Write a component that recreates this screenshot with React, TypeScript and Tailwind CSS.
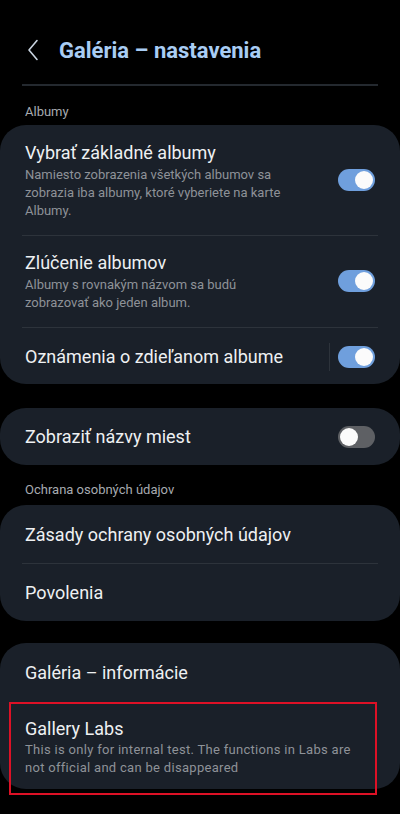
import React from "react";

function Toggle({ on }: { on: boolean }) {
  return on ? (
    <div className="w-[37px] h-[22px] rounded-full bg-[#6f9fdd] flex items-center justify-end pr-[2px] shrink-0">
      <div className="w-[18px] h-[18px] rounded-full bg-[#fbfbfb]" />
    </div>
  ) : (
    <div className="w-[37px] h-[22px] rounded-full bg-[#5e6064] flex items-center justify-start pl-[2px] shrink-0">
      <div className="w-[18px] h-[18px] rounded-full bg-[#fbfbfb]" />
    </div>
  );
}

function Divider() {
  return <div className="mx-[22px] h-px bg-[#2d333b]" />;
}

export default function App() {
  return (
    <div
      className="w-[400px] h-[814px] bg-black text-[#eef0f2] overflow-hidden"
      style={{ fontFamily: "Roboto, 'Noto Sans', sans-serif" }}
    >
      {/* Header */}
      <div className="h-[100px] flex flex-col">
        <div className="flex items-center h-[40px] mt-[30px]">
          <svg width="14" height="24" viewBox="0 0 14 24" className="ml-[26px]">
            <path d="M11 2.5 L3 12 L11 21.5" fill="none" stroke="#c9d4e0" strokeWidth="1.6" strokeLinecap="round" strokeLinejoin="round" />
          </svg>
          <div className="ml-[19px] text-[22px] font-bold text-[#a9cdf4]">
            Galéria – nastavenia
          </div>
        </div>
        <div className="mt-[14px] mx-[22px] h-[2px] bg-[#24292f]" />
      </div>

      <div className="pl-[25px] text-[13px] text-[#a7abb0] h-[25px] leading-[20px] pt-[2px]">Albumy</div>

      {/* Card 1 */}
      <div className="bg-[#1a2029] rounded-[26px]">
        <div className="flex items-center pl-[25px] pr-[25px] pt-[15px] pb-[15px]">
          <div className="flex-1">
            <div className="text-[18px] leading-[26px]">Vybrať základné albumy</div>
            <div className="text-[13px] leading-[18px] text-[#8e9298] pr-[30px]">
              Namiesto zobrazenia všetkých albumov sa zobrazia iba albumy, ktoré vyberiete na karte Albumy.
            </div>
          </div>
          <Toggle on />
        </div>
        <Divider />
        <div className="flex items-center pl-[25px] pr-[25px] pt-[14px] pb-[15px]">
          <div className="flex-1">
            <div className="text-[18px] leading-[26px]">Zlúčenie albumov</div>
            <div className="text-[13px] leading-[18px] text-[#8e9298] pr-[60px]">
              Albumy s rovnakým názvom sa budú zobrazovať ako jeden album.
            </div>
          </div>
          <Toggle on />
        </div>
        <Divider />
        <div className="flex items-center pl-[25px] pr-[25px] h-[56px] pt-[2px]">
          <div className="flex-1 text-[18px] leading-[26px]">Oznámenia o zdieľanom albume</div>
          <div className="w-px h-[28px] bg-[#2d333b] mr-[8px]" />
          <Toggle on />
        </div>
      </div>

      {/* Card 2 */}
      <div className="bg-[#1a2029] rounded-[26px] mt-[24px] flex items-center pl-[25px] pr-[25px] h-[57px]">
        <div className="flex-1 text-[18px] leading-[26px]">Zobraziť názvy miest</div>
        <Toggle on={false} />
      </div>

      <div className="pl-[25px] text-[13px] text-[#a7abb0] h-[40px] pt-[10px] flex items-center">Ochrana osobných údajov</div>

      {/* Card 3 */}
      <div className="bg-[#1a2029] rounded-[26px]">
        <div className="h-[58px] flex items-center pl-[25px] text-[18px]">Zásady ochrany osobných údajov</div>
        <Divider />
        <div className="h-[57px] flex items-center pl-[25px] text-[18px]">Povolenia</div>
      </div>

      {/* Card 4 */}
      <div className="bg-[#1a2029] rounded-[26px] mt-[22px] relative">
        <div className="h-[59px] flex items-center pl-[25px] text-[18px]">Galéria – informácie</div>
        <div className="pl-[25px] pr-[25px] pt-[15px] pb-[12px]">
          <div className="text-[18px] leading-[24px]">Gallery Labs</div>
          <div className="text-[13px] leading-[18px] text-[#8e9298] tracking-[0.3px] max-w-[335px]">
            This is only for internal test. The functions in Labs are not official and can be disappeared
          </div>
        </div>
        <div className="absolute left-[9px] top-[59px] w-[368px] h-[93px] border-2 border-[#dd1126] pointer-events-none" />
      </div>
    </div>
  );
}
